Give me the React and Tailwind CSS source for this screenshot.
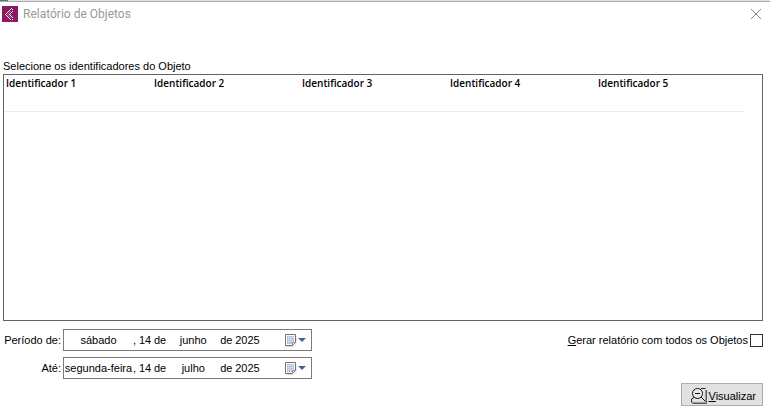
import React from "react";

const columns = [1, 2, 3, 4, 5];

function Logo() {
  return (
    <svg className="size-4 shrink-0" viewBox="0 0 16 16" aria-hidden="true">
      <rect width="16" height="16" fill="#8b1a63" />
      <path
        d="M9 2h1v1H9zM8 3h1v1H8zM7 4h1v1H7zM6 5h1v1H6zM5 6h1v1H5zM4 7h1v1H4zM3 8h1v1H3zM4 9h1v1H4zM5 10h1v1H5zM6 11h1v1H6zM7 12h1v1H7zM8 13h1v1H8zM10 3h1v1h-1zM10 5h1v1h-1zM9 6h1v1H9zM8 7h1v1H8zM7 8h1v1H7zM8 9h1v1H8zM9 10h1v1H9zM10 11h1v1h-1zM10 13h1v1h-1z"
        fill="#f9edf4"
      />
      <path d="M8 5h1v1H8zM7 6h1v1H7zM6 7h1v1H6zM5 8h1v1H5zM6 9h1v1H6zM7 10h1v1H7zM8 11h1v1H8z" fill="#b4638f" />
    </svg>
  );
}

function CalendarIcon() {
  return (
    <svg className="h-3.5 w-6" viewBox="0 0 24 14" aria-hidden="true">
      <path d="M3 13.500h8l2-2V3" fill="none" stroke="#dedada" />
      <path d="M2.500 1.500h10v8l-3 3h-7z" fill="#fff" stroke="#7d6e6e" />
      <path d="M4 3h7v6H9v2H4z" fill="#a9b7d3" />
      <path
        d="M4 4.500h7M4 6.500h7M4 8.500h7M5.500 3v8M7.500 3v8M9.500 3v6"
        stroke="#e3e8f2"
        strokeWidth="0.600"
      />
      <path d="M9.500 12v-2.500H12" fill="#fff" stroke="#9a8d8d" />
      <path d="M15 5h8l-4 4z" fill="#46608f" />
    </svg>
  );
}

function PreviewIcon() {
  return (
    <svg className="size-4 shrink-0" viewBox="0 0 16 16" aria-hidden="true">
      <path d="M14.500 2v12.500H2" fill="none" stroke="#9a9a9a" />
      <path d="M15.500 2v13.500H2" fill="none" stroke="#5c5c5c" />
      <path d="M10 .5h4.500M3 9.500 .5 11v3l1.500 1.500" fill="none" stroke="#222" />
      <circle cx="6.500" cy="5.500" r="5" fill="#eaeaea" stroke="#111" />
      <path d="M4 5.500h5" stroke="#111" />
      <path d="M10 9l4.500 4.500" stroke="#111" />
    </svg>
  );
}

function DateField({ id, label, weekday, day, month, year }) {
  const part = "min-w-0 bg-transparent p-0 text-center outline-none";
  return (
    <div className="flex items-center">
      <label htmlFor={id} className="w-[63px] shrink-0 pr-0.5 text-right">
        {label}
      </label>
      <div className="flex h-[22px] w-[249px] items-center border border-[#7a7a7a] bg-white">
        <input id={id} className={`${part} w-[69px]`} defaultValue={weekday} />
        <span className="w-1.5">,</span>
        <input className={`${part} w-3`} defaultValue={day} aria-label="Dia" />
        <span className="pl-[3px]">de</span>
        <input className={`${part} w-[54px]`} defaultValue={month} aria-label="Mês" />
        <span className="pr-0.5">de</span>
        <input className={`${part} w-[26px]`} defaultValue={year} aria-label="Ano" />
        <button type="button" className="mr-1 ml-auto" aria-label="Abrir calendário">
          <CalendarIcon />
        </button>
      </div>
    </div>
  );
}

export default function App() {
  return (
    <main className="flex min-h-screen flex-col bg-white font-['Liberation_Sans',Arial,sans-serif] text-[11px] leading-4 text-black">
      <div className="flex h-0.5 shrink-0 flex-col bg-[#a9a9a9]">
        <div className="flex h-px bg-[#e4e4e4]">
          <div className="w-2 bg-[#66707a]" />
        </div>
      </div>
      <header className="flex h-6 items-center px-0.5">
        <Logo />
        <h1 className="ml-[5px] font-['Roboto',sans-serif] text-[12px] text-[#999]">
          Relatório de Objetos
        </h1>
        <button type="button" className="mr-1.5 ml-auto" aria-label="Fechar">
          <svg className="size-3" viewBox="0 0 12 12" aria-hidden="true">
            <path d="M1 1l10 10M11 1L1 11" stroke="#8c8c8c" strokeWidth="1" />
          </svg>
        </button>
      </header>

      <section className="mt-8 flex grow flex-col pr-[7px] pl-[3px]">
        <h2 id="identifiers">Selecione os identificadores do Objeto</h2>
        <div className="min-h-[247px] border border-[#646464] pr-[18px]">
          <table
            aria-labelledby="identifiers"
            className="w-full table-fixed border-collapse font-['Open_Sans','Noto_Sans',sans-serif] text-[10px]"
          >
            <thead>
              <tr className="h-9 border-b border-[#ececec]">
                {columns.map((n) => (
                  <th key={n} className="p-0 pl-0.5 text-left align-top font-semibold">
                    Identificador {n}
                  </th>
                ))}
              </tr>
            </thead>
          </table>
        </div>
      </section>

      <section className="mt-2 flex items-start justify-between pr-[7px]">
        <div className="flex flex-col gap-1.5">
          <DateField id="from" label="Período de:" weekday="sábado" day="14" month="junho" year="2025" />
          <DateField id="to" label="Até:" weekday="segunda-feira" day="14" month="julho" year="2025" />
        </div>
        <label className="mt-[3px] flex items-center gap-0.5">
          <span>
            <u className="underline-offset-1">G</u>erar relatório com todos os Objetos
          </span>
          <input
            type="checkbox"
            className="size-[13px] appearance-none border border-[#333] bg-white checked:bg-[#333]"
          />
        </label>
      </section>

      <footer className="mt-1 mb-1 flex justify-end pr-[7px]">
        <button
          type="button"
          className="flex h-[23px] w-[82px] items-center justify-end gap-0.5 border border-[#adadad] bg-[#e1e1e1] pt-0.5 pr-1.5"
        >
          <PreviewIcon />
          <span>
            <u className="underline-offset-1">V</u>isualizar
          </span>
        </button>
      </footer>
    </main>
  );
}
